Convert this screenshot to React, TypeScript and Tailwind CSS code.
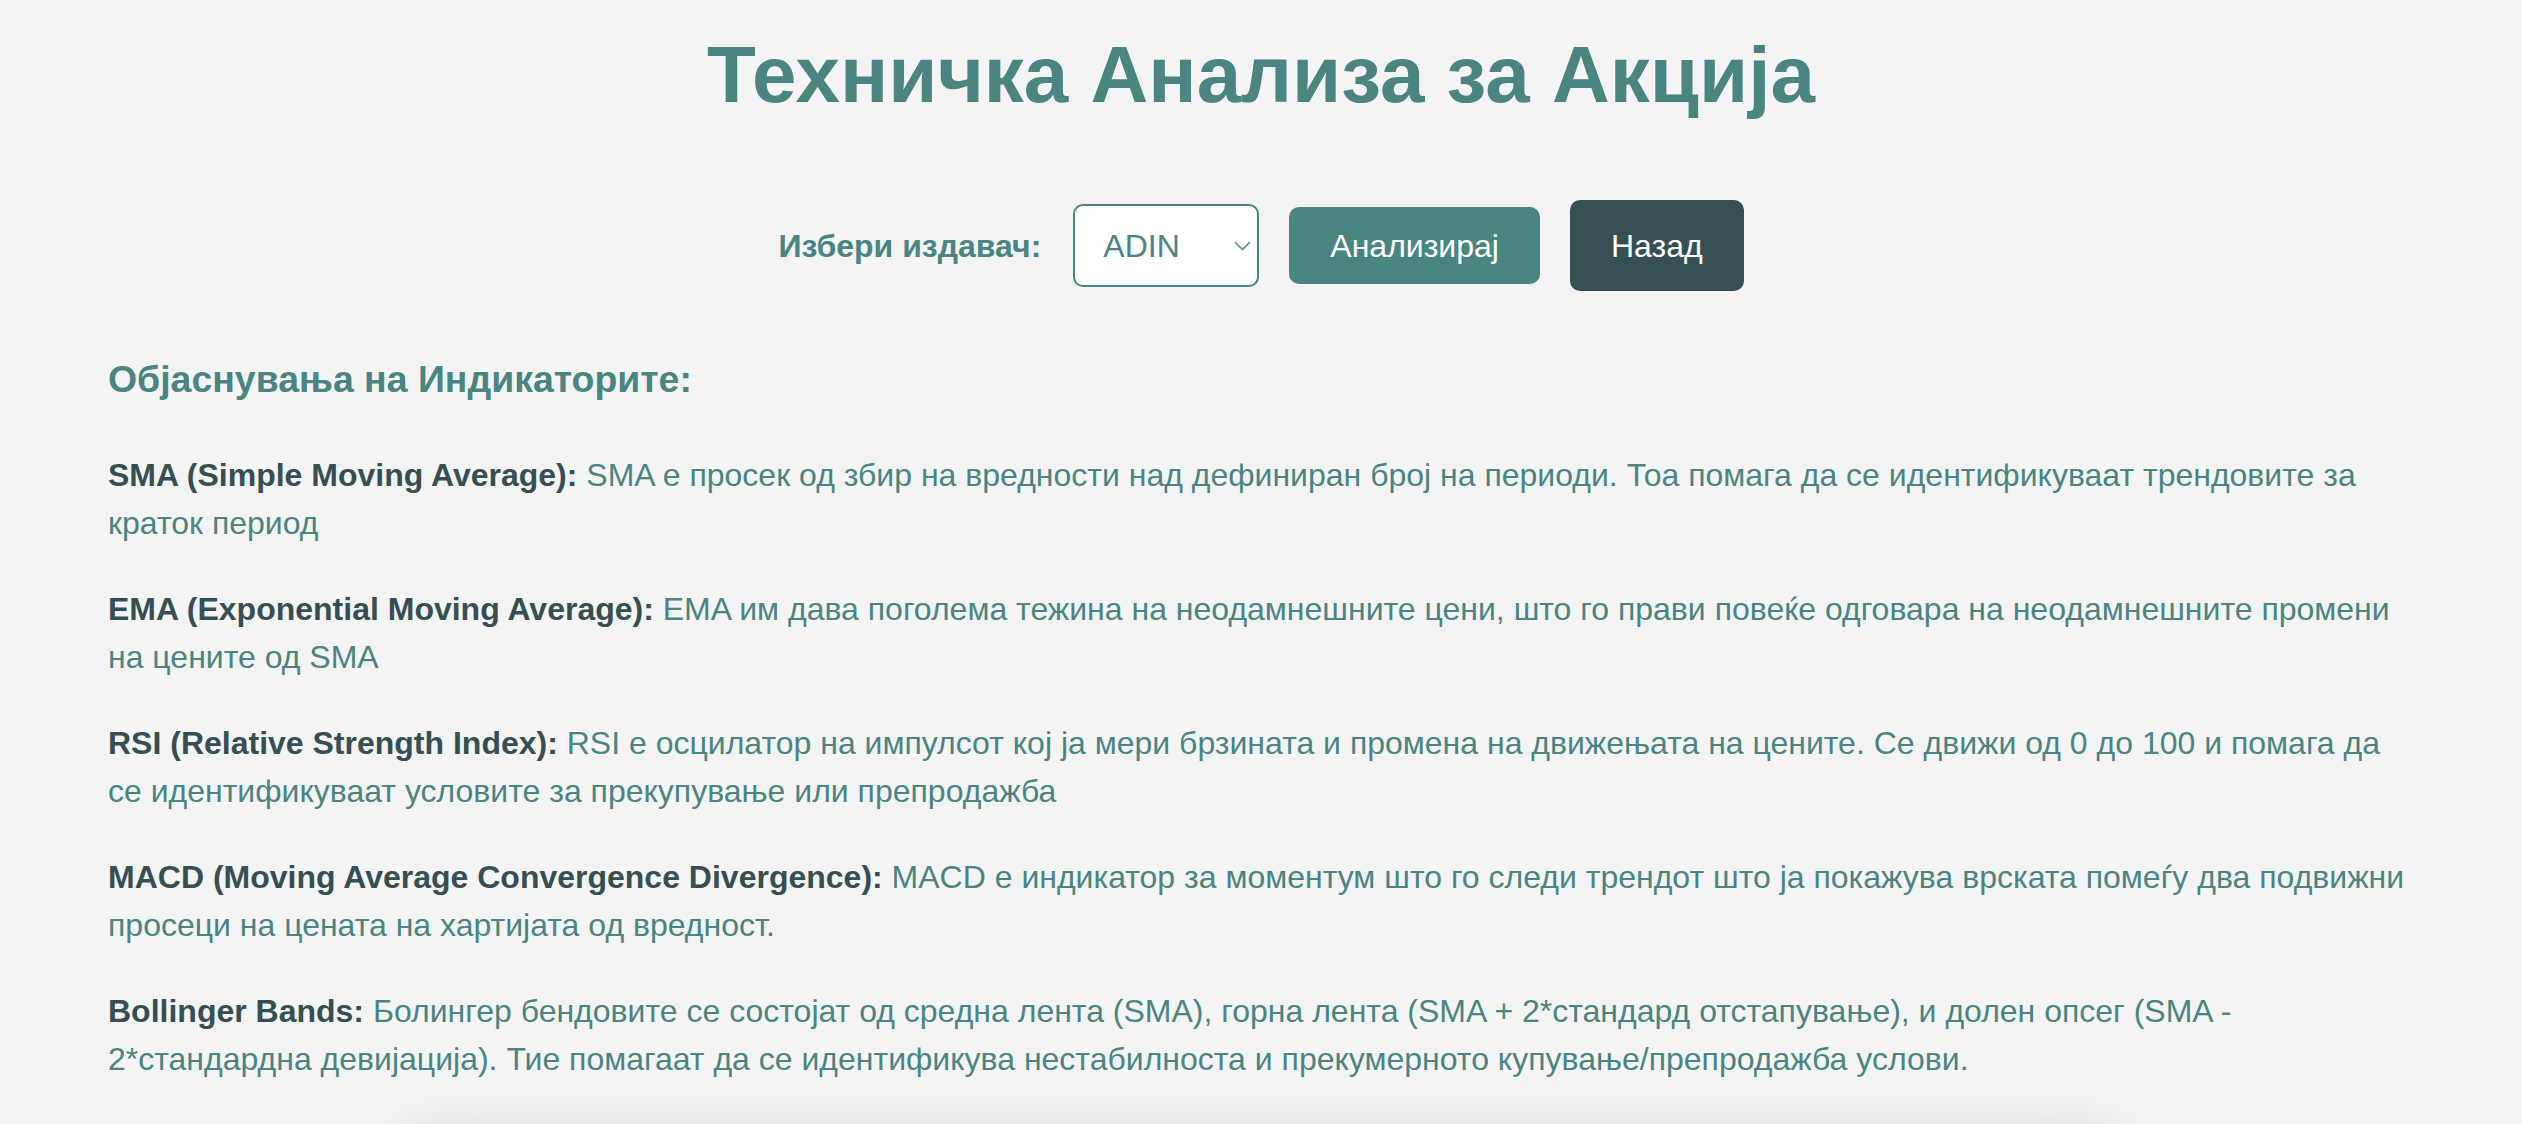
import { useState } from 'react';

const INDICATORS = [
  {
    name: 'SMA (Simple Moving Average):',
    text: 'SMA е просек од збир на вредности над дефиниран број на периоди. Тоа помага да се идентификуваат трендовите за краток период',
  },
  {
    name: 'EMA (Exponential Moving Average):',
    text: 'EMA им дава поголема тежина на неодамнешните цени, што го прави повеќе одговара на неодамнешните промени на цените од SMA',
  },
  {
    name: 'RSI (Relative Strength Index):',
    text: 'RSI е осцилатор на импулсот кој ја мери брзината и промена на движењата на цените. Се движи од 0 до 100 и помага да се идентификуваат условите за прекупување или препродажба',
  },
  {
    name: 'MACD (Moving Average Convergence Divergence):',
    text: 'MACD е индикатор за моментум што го следи трендот што ја покажува врската помеѓу два подвижни просеци на цената на хартијата од вредност.',
  },
  {
    name: 'Bollinger Bands:',
    text: 'Болингер бендовите се состојат од средна лента (SMA), горна лента (SMA + 2*стандард отстапување), и долен опсег (SMA - 2*стандардна девијација). Тие помагаат да се идентификува нестабилноста и прекумерното купување/препродажба услови.',
  },
];

const ISSUERS = ['ADIN', 'ALK', 'KMB', 'GRNT', 'TEL'];

export default function App() {
  const [issuer, setIssuer] = useState('ADIN');

  return (
    <div className="min-h-screen bg-[#f4f4f4] font-[family-name:Liberation_Sans,Arial,sans-serif] pb-[200px]">
      <h1 className="pt-[29px] text-center text-[80px] font-bold leading-[92px] text-[#4a8581]">
        Техничка Анализа за Акција
      </h1>

      <div className="mt-[79px] flex items-center justify-center">
        <label className="mr-[32px] text-[32px] font-bold text-[#4a8581]">Избери издавач:</label>
        <div className="relative mr-[30px]">
          <select
            value={issuer}
            onChange={(e) => setIssuer(e.target.value)}
            className="h-[83px] w-[186px] appearance-none rounded-[10px] border-2 border-[#4a8581] bg-white pl-[28px] font-[family-name:Liberation_Sans,Arial,sans-serif] text-[32px] text-[#4a8581] outline-none"
          >
            {ISSUERS.map((s) => (
              <option key={s} value={s}>
                {s}
              </option>
            ))}
          </select>
          <svg
            className="pointer-events-none absolute right-[8px] top-[37px]"
            width="17"
            height="10"
            viewBox="0 0 17 10"
            fill="none"
          >
            <path d="M1 1L8.5 8.5L16 1" stroke="#5e8b88" strokeWidth="1.6" />
          </svg>
        </div>
        <button className="mr-[30px] h-[77px] rounded-[10px] bg-[#4a8581] px-[41px] font-[family-name:Liberation_Sans,Arial,sans-serif] text-[32px] text-white">
          Анализирај
        </button>
        <button className="h-[91px] rounded-[10px] bg-[#354f52] px-[41px] font-[family-name:Liberation_Sans,Arial,sans-serif] text-[32px] text-white">
          Назад
        </button>
      </div>

      <div className="px-[108px]">
        <h3 className="mt-[67px] text-[37.44px] font-bold leading-[43px] text-[#4a8581]">
          Објаснувања на Индикаторите:
        </h3>
        <div className="mt-[50px] flex flex-col gap-[38px]">
          {INDICATORS.map((ind) => (
            <p key={ind.name} className="text-[32px] leading-[48px] text-[#4a8581]">
              <strong className="font-bold text-[#354f52]">{ind.name}</strong> {ind.text}
            </p>
          ))}
        </div>
      </div>

      <div className="mx-auto mt-[52px] h-[600px] w-[1720px] rounded-[12px] bg-[#f4f4f4] shadow-[0_0_60px_rgba(0,0,0,0.12)]" />
    </div>
  );
}
